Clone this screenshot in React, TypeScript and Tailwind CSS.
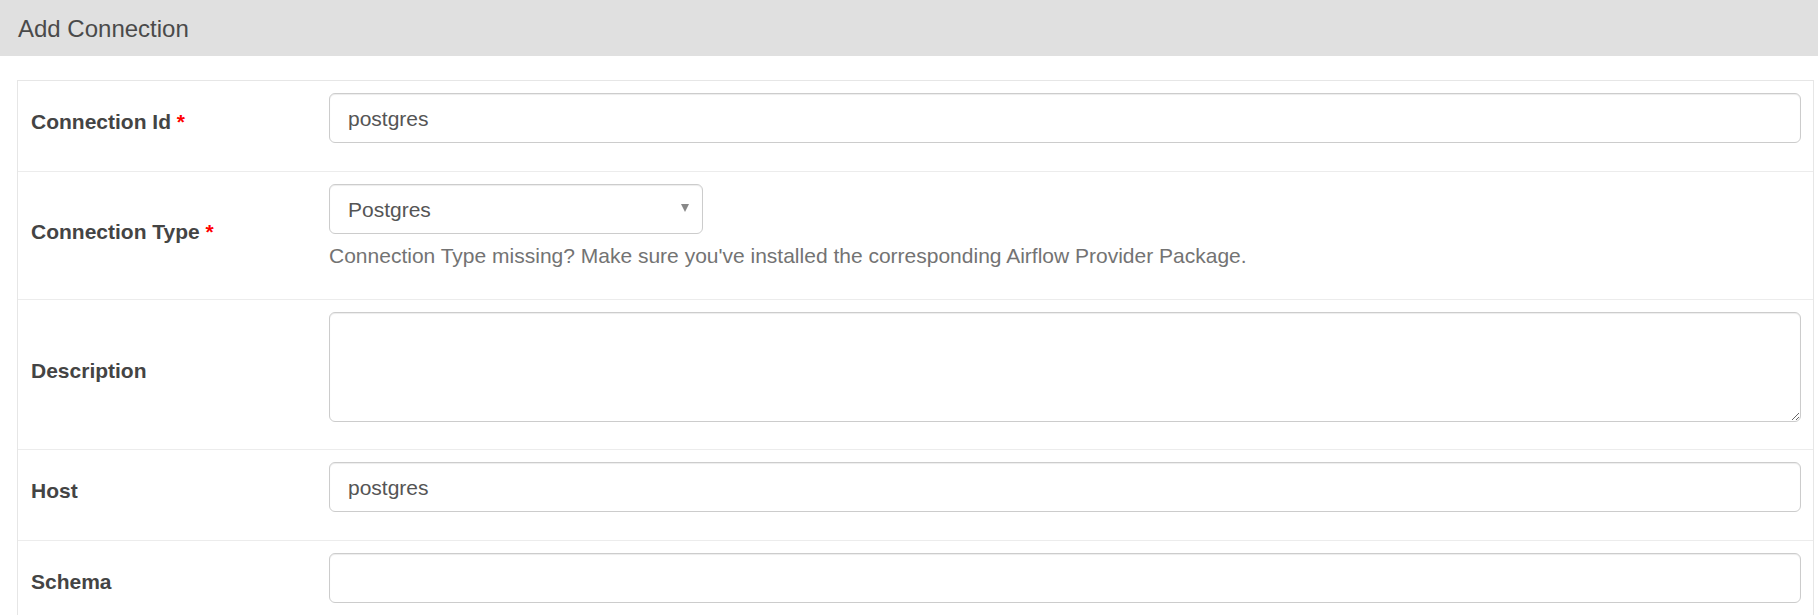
import React from 'react';

type Row = {
  label: string;
  required?: boolean;
  kind: 'input' | 'select' | 'textarea';
  value?: string;
  help?: string;
};

const ROWS: Row[] = [
  { label: 'Connection Id', required: true, kind: 'input', value: 'postgres' },
  {
    label: 'Connection Type',
    required: true,
    kind: 'select',
    value: 'Postgres',
    help: "Connection Type missing? Make sure you've installed the corresponding Airflow Provider Package.",
  },
  { label: 'Description', kind: 'textarea' },
  { label: 'Host', kind: 'input', value: 'postgres' },
  { label: 'Schema', kind: 'input' },
];

const inputCls =
  'block w-full h-[50px] rounded-[6px] border border-[#cccccc] bg-white pl-[18px] pt-[2px] text-[21px] text-[#555555] shadow-[inset_0_1px_1px_rgba(0,0,0,0.075)] focus:outline-none';

export default function App() {
  return (
    <div className="min-h-[615px] bg-white font-['Liberation_Sans',Arial,sans-serif]">
      <div className="h-[56px] bg-[#e0e0e0] flex items-center pl-[18px] pt-[1px]">
        <h1 className="text-[24px] text-[#4a4a4a] font-normal leading-none">Add Connection</h1>
      </div>

      <div className="mt-[24px] ml-[17px] w-[1797px] border border-[#e6e6e6] border-b-0">
        {ROWS.map((r) => (
          <div key={r.label} className="flex border-b border-[#ececec]">
            <div className="w-[299px] shrink-0 flex items-center pl-[13px]">
              <label className="mb-[9px] text-[21px] leading-[29px] font-bold text-[#444444]">
                {r.label}
                {r.required && <span className="text-[#ff0000]"> *</span>}
              </label>
            </div>
            <div
              className={
                'flex-1 pl-[12px] pr-[12px] pt-[12px] ' +
                (r.kind === 'textarea' ? 'pb-[27px]' : r.kind === 'select' ? 'pb-[29px]' : 'pb-[28px]')
              }
            >
              {r.kind === 'input' && (
                <input readOnly value={r.value || ''} className={inputCls} />
              )}
              {r.kind === 'select' && (
                <>
                  <div className="w-[374px] h-[50px] rounded-[6px] border border-[#cccccc] bg-white flex items-center justify-between pl-[18px] pr-[13px] shadow-[inset_0_1px_1px_rgba(0,0,0,0.075)]">
                    <span className="pt-[2px] text-[21px] text-[#555555]">{r.value}</span>
                    <svg width="8" height="8" viewBox="0 0 8 8" className="-mt-[3px]">
                      <path d="M0 0 L8 0 L4 8 Z" fill="#888888" />
                    </svg>
                  </div>
                  <p className="mt-[7px] text-[21px] leading-[29px] text-[#737373]">{r.help}</p>
                </>
              )}
              {r.kind === 'textarea' && (
                <textarea
                  className="block w-full h-[110px] rounded-[6px] border border-[#cccccc] bg-white px-[18px] py-[8px] text-[21px] text-[#555555] shadow-[inset_0_1px_1px_rgba(0,0,0,0.075)] focus:outline-none"
                />
              )}
            </div>
          </div>
        ))}
      </div>
    </div>
  );
}
